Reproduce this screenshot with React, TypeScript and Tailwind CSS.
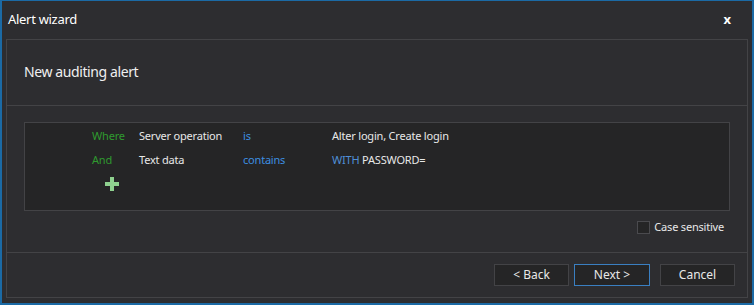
import React from "react";

const rows = [
  { join: "Where", field: "Server operation", op: "is", value: <span className="text-[#e8e8e8]">Alter login, Create login</span> },
  {
    join: "And",
    field: "Text data",
    op: "contains",
    value: (
      <span className="text-[#e8e8e8]">
        <span className="text-[#4f8fd6]">WITH</span> PASSWORD=
      </span>
    ),
  },
];

export default function App() {
  return (
    <div className="w-[754px] h-[305px] flex flex-col bg-[#2d2d30] border-[#1b6aa5] border-t border-x-2 border-b-2 text-[#e8e8e8] font-['Segoe_UI','Noto_Sans',sans-serif] overflow-hidden">
      {/* Title bar */}
      <div className="h-[38px] shrink-0 flex items-center justify-between pl-[6px] pr-[21px]">
        <span className="text-[13px] tracking-[-0.3px] text-white">Alert wizard</span>
        <span className="text-[13px] font-bold text-white">x</span>
      </div>

      {/* Wizard panel */}
      <div className="flex-1 mx-[4px] mb-[5px] border border-[#434346] flex flex-col">
        <div className="h-[66px] shrink-0 border-b border-[#434346] flex items-center pl-[17px] pb-[2px]">
          <span className="text-[14px] tracking-[-0.4px] text-[#f0f0f0]">New auditing alert</span>
        </div>

        {/* Filter box */}
        <div className="mt-[16px] mx-[17px] h-[89px] shrink-0 bg-[#252526] border border-[#434346] pt-[1px] pl-[67px] text-[11px] tracking-[-0.2px]">
          {rows.map((r) => (
            <div key={r.join} className="h-[24px] flex items-center">
              <span className="w-[47px] text-[#2f9a2f]">{r.join}</span>
              <span className="w-[104px]">{r.field}</span>
              <span className="w-[89px] text-[#3d8fe0]">{r.op}</span>
              {r.value}
            </div>
          ))}
          <div className="h-[24px] flex items-center pl-[13px]">
            <svg width="14" height="14" viewBox="0 0 14 14">
              <rect x="5" y="0" width="4" height="14" fill="#8fd18f" />
              <rect x="0" y="5" width="14" height="4" fill="#8fd18f" />
            </svg>
          </div>
        </div>

        <div className="mt-[8px] h-[16px] mr-[23px] flex items-center justify-end gap-[4px] text-[11px] tracking-[-0.2px]">
          <span className="w-[13px] h-[13px] border border-[#4a4a4e] bg-[#252526]" />
          <span>Case sensitive</span>
        </div>

        {/* Buttons */}
        <div className="mt-[17px] flex-1 border-t border-[#434346] flex items-start justify-end gap-[5px] pt-[11px] pr-[12px] text-[12px]">
          <button className="w-[75px] h-[22px] bg-[#252526] border border-[#434346]">&lt; Back</button>
          <button className="w-[76px] h-[22px] bg-[#252526] border border-[#3a7fc1] mr-[5px]">Next &gt;</button>
          <button className="w-[75px] h-[22px] bg-[#252526] border border-[#434346]">Cancel</button>
        </div>
      </div>
    </div>
  );
}
